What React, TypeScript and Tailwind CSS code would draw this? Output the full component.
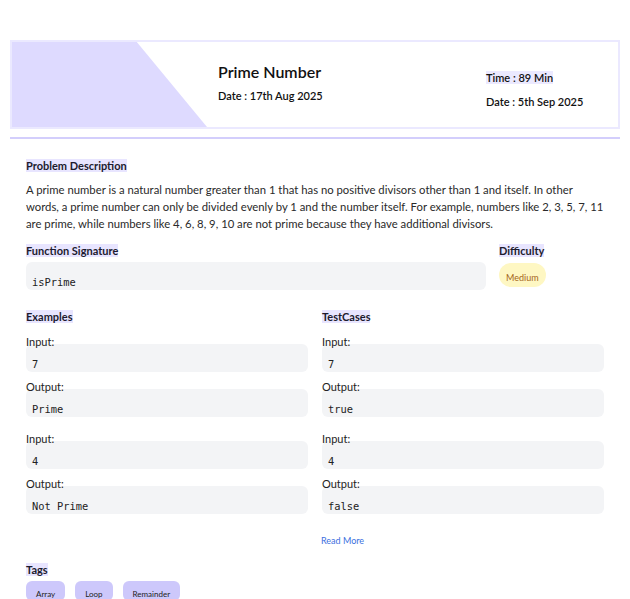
import React from "react";

type Pair = { input: string; output: string };

const examples: Pair[] = [
  { input: "7", output: "Prime" },
  { input: "4", output: "Not Prime" },
];

const testCases: Pair[] = [
  { input: "7", output: "true" },
  { input: "4", output: "false" },
];

const Heading = ({ children }: { children: React.ReactNode }) => (
  <h3 className="text-[11px] leading-[14px] font-bold text-[#1c1b2e]">
    <span className="bg-[#e8e5ff]">{children}</span>
  </h3>
);

const CodeBox = ({ children }: { children: React.ReactNode }) => (
  <div className="h-[28px] rounded-md bg-[#f3f4f6] px-[6px] pt-[13px] font-['DejaVu_Sans_Mono',monospace] text-[10.4px] leading-[14px] text-[#222]">
    {children}
  </div>
);

const PairList = ({ title, items }: { title: string; items: Pair[] }) => (
  <div>
    <Heading>{title}</Heading>
    <div className="mt-[11px] flex flex-col gap-[15px]">
      {items.map((p, i) => (
        <div key={i}>
          <div className="text-[11px] leading-[14px] text-[#222]">Input:</div>
          <div className="-mt-[5px]">
            <CodeBox>{p.input}</CodeBox>
          </div>
          <div className="mt-[8px] text-[11px] leading-[14px] text-[#222]">Output:</div>
          <div className="-mt-[5px]">
            <CodeBox>{p.output}</CodeBox>
          </div>
        </div>
      ))}
    </div>
  </div>
);

export default function App() {
  return (
    <div className="min-h-screen bg-white px-[10px] pt-[40px] font-['Lato',sans-serif] text-[#222]">
      {/* header card */}
      <div className="flex h-[89px] border-2 border-[#ebe9ff]">
        <div className="w-[195px] shrink-0 bg-[#dedaff] [clip-path:polygon(0_0,64%_0,100%_100%,0_100%)]" />
        <div className="ml-[11px] flex flex-1 flex-col pt-[20px]">
          <div className="text-[16px] leading-[20px] font-semibold text-[#111]">Prime Number</div>
          <div className="mt-[7px] text-[11px] leading-[13px] font-semibold text-[#111]">Date : 17th Aug 2025</div>
        </div>
        <div className="mr-[30px] flex w-[104px] flex-col pt-[29px]">
          <div className="ml-[2px] text-[11px] leading-[13px] font-semibold text-[#111]">
            <span className="bg-[#ebe9ff]">Time : 89 Min</span>
          </div>
          <div className="ml-[2px] mt-[11px] text-[11px] leading-[13px] font-semibold text-[#111]">Date : 5th Sep 2025</div>
        </div>
      </div>
      <div className="mt-[8px] h-[2px] bg-[#d3cefc]" />

      <div className="px-[16px] pt-[20px]">
        <Heading>Problem Description</Heading>
        <p className="mt-[8px] text-[11.3px] leading-[17px] text-[#2a2a2a]">
          A prime number is a natural number greater than 1 that has no positive divisors other than 1 and itself. In other
          words, a prime number can only be divided evenly by 1 and the number itself. For example, numbers like 2, 3, 5, 7, 11
          are prime, while numbers like 4, 6, 8, 9, 10 are not prime because they have additional divisors.
        </p>

        <div className="mt-[12px] flex gap-[13px]">
          <div className="w-[460px]">
            <Heading>Function Signature</Heading>
            <div className="mt-[4px]">
              <div className="h-[28px] rounded-md bg-[#f3f4f6] px-[6px] pt-[13px] font-['DejaVu_Sans_Mono',monospace] text-[10.4px] leading-[14px] text-[#222]">
                isPrime
              </div>
            </div>
          </div>
          <div>
            <Heading>Difficulty</Heading>
            <div className="mt-[5px] inline-flex h-[24px] items-end rounded-full bg-[#fef7c3] px-[7px] pb-[3px] text-[9px] leading-[12px] text-[#a4651a]">
              Medium
            </div>
          </div>
        </div>

        <div className="mt-[20px] grid grid-cols-2 gap-[14px]">
          <PairList title="Examples" items={examples} />
          <PairList title="TestCases" items={testCases} />
        </div>

        <div className="mt-[21px] pl-[295px] text-[9px] leading-[12px] text-[#3b6fe0]">Read More</div>

        <div className="mt-[16px]">
          <Heading>Tags</Heading>
          <div className="mt-[4px] flex gap-[10px]">
            {["Array", "Loop", "Remainder"].map((t) => (
              <span
                key={t}
                className="inline-flex h-[20px] items-end rounded-md bg-[#cdc8fb] px-[10px] pb-[2px] text-[8px] leading-[10px] text-[#222]"
              >
                {t}
              </span>
            ))}
          </div>
        </div>
      </div>
    </div>
  );
}
